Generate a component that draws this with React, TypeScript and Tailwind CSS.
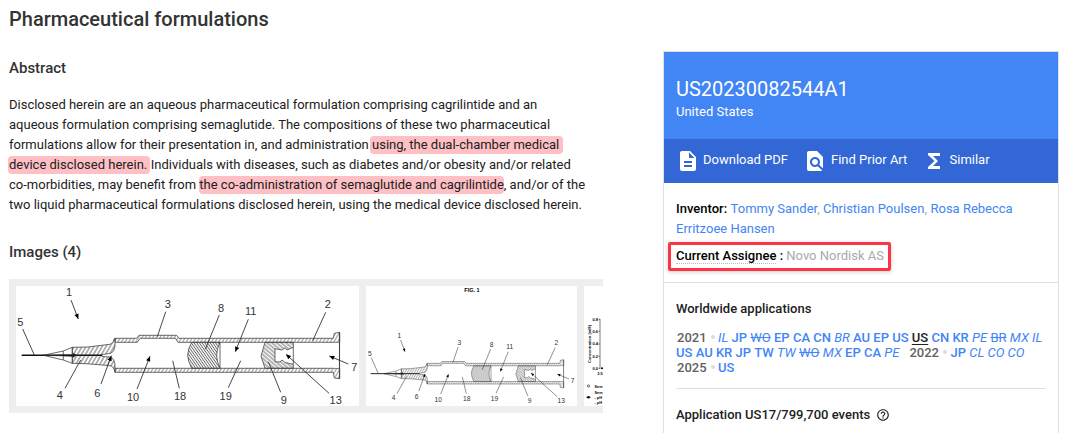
import React from "react";
import { MdDescription, MdFindInPage, MdFunctions, MdHelpOutline } from "react-icons/md";

type Application = {
  code: string;
  status?: "pending" | "ceased" | "current";
};

type Label = {
  text: string;
  x: number;
  y: number;
  // leader line from the number to the part
  line: [number, number, number, number];
  arrow?: boolean;
};

const labels: Label[] = [
  { text: "1", x: 53, y: 10, line: [55, 14, 62.3, 33], arrow: true },
  { text: "2", x: 311.7, y: 22.3, line: [309.7, 26.3, 296.7, 54.7] },
  { text: "3", x: 151.7, y: 22.3, line: [149.7, 25.7, 141.3, 50.7] },
  { text: "4", x: 43.7, y: 112.7, line: [49, 102.3, 64.7, 74] },
  { text: "5", x: 4.3, y: 40.3, line: [6.7, 43, 18.3, 69] },
  { text: "6", x: 81.3, y: 110.7, line: [85, 98, 95.3, 69.7], arrow: true },
  { text: "7", x: 338.3, y: 85.3, line: [332.3, 78, 313.3, 70], arrow: true },
  { text: "8", x: 205, y: 25.7, line: [203.3, 29, 189.3, 63.3] },
  { text: "9", x: 267.7, y: 118, line: [264.7, 106.3, 252.3, 75.7] },
  { text: "10", x: 117, y: 115.3, line: [121, 103, 134, 70.3], arrow: true },
  { text: "11", x: 234.7, y: 29, line: [232.3, 33.3, 219.3, 65.7], arrow: true },
  { text: "13", x: 319.7, y: 118, line: [313, 107.3, 270, 68.3], arrow: true },
  { text: "18", x: 164, y: 114.3, line: [163.3, 102.3, 156.7, 74.7] },
  { text: "19", x: 209.7, y: 113.7, line: [212.3, 101.7, 224.7, 74.7] },
];

const apps2021a: Application[] = [
  { code: "IL", status: "pending" },
  { code: "JP" },
  { code: "WO", status: "ceased" },
  { code: "EP" },
  { code: "CA" },
  { code: "CN" },
  { code: "BR", status: "pending" },
  { code: "AU" },
  { code: "EP" },
  { code: "US" },
  { code: "US", status: "current" },
  { code: "CN" },
  { code: "KR" },
  { code: "PE", status: "pending" },
  { code: "BR", status: "ceased" },
  { code: "MX", status: "pending" },
  { code: "IL", status: "pending" },
];

const apps2021b: Application[] = [
  { code: "US" },
  { code: "AU" },
  { code: "KR" },
  { code: "JP" },
  { code: "TW" },
  { code: "TW", status: "pending" },
  { code: "WO", status: "ceased" },
  { code: "MX", status: "pending" },
  { code: "EP" },
  { code: "CA" },
  { code: "PE", status: "pending" },
];

const apps2022: Application[] = [
  { code: "JP" },
  { code: "CL", status: "pending" },
  { code: "CO", status: "pending" },
  { code: "CO", status: "pending" },
];

const Syringe = ({ id }: { id: string }) => (
  <g stroke="#444" strokeWidth="0.8" fill="none">
    <defs>
      <pattern id={`${id}-wall`} width="3.6" height="8" patternUnits="userSpaceOnUse" patternTransform="skewX(-30)">
        <path d="M1 0V8" stroke="#555" strokeWidth="0.7" />
      </pattern>
      <pattern id={`${id}-hub`} width="4" height="8" patternUnits="userSpaceOnUse" patternTransform="skewX(-30)">
        <path d="M1 0V8" stroke="#444" strokeWidth="0.8" />
      </pattern>
      <pattern id={`${id}-piston`} width="2.2" height="8" patternUnits="userSpaceOnUse" patternTransform="rotate(-35)">
        <path d="M1 0V8" stroke="#555" strokeWidth="0.8" />
      </pattern>
      <pattern id={`${id}-stopper`} width="3" height="8" patternUnits="userSpaceOnUse" patternTransform="rotate(-50)">
        <path d="M1 0V8" stroke="#444" strokeWidth="0.8" />
      </pattern>
    </defs>
    {/* needle and hub */}
    <path d="M27.3 69.3L47.3 65L56.3 61.3V77.3L47.3 74ZM47.3 65V74" />
    <path
      d="M56.3 61.3L72 61L94 58.3Q98 57.5 98 53L99 52.3V56.3Q99.5 66 94 67.5L86 68.5V70.5L94 71Q99.5 72.5 99 82.3V86.3Q98 80.5 94 79.7L72 77.8L56.3 77.3Z"
      fill={`url(#${id}-hub)`}
    />
    <path d="M5.7 69.3H86" stroke="#111" strokeWidth="1.5" />
    <path d="M28 69.3L57 68.4V70.4ZM57 67L60.5 69.3L57 71.6Z" fill="#111" strokeWidth="0.4" />
    {/* barrel */}
    <path
      d="M99 52.3H120.7L123 49.3H160.7L163 52.3H317.3L318.3 47.3L323.7 46.3V56.3H162L159.5 52.3H124L121.5 56.3H99Z"
      fill={`url(#${id}-wall)`}
    />
    <path d="M99 82.3H323.7V92.7L318.3 92L317.3 86.3H99Z" fill={`url(#${id}-wall)`} />
    <path d="M318 56.9H322.8V81.7H318Z" fill="#fff" stroke="none" />
    <path d="M323.5 46.3V92.7" strokeWidth="1.1" />
    {/* pistons */}
    <path d="M175.7 56.3H204Q197.4 69.3 204 82.3H175.7L172.7 75Q170.7 69.3 172.7 63Z" fill={`url(#${id}-piston)`} />
    <path d="M204 56.3V82.3" />
    <path
      d="M249 56.3H277.3V61.3L271 64L269 61.8L266 64L259 62.7V75.7L264 76L266 74L269 76.5L277.3 78.3V82.3H249L245 70Z"
      fill={`url(#${id}-stopper)`}
    />
    <path d="M277.3 61.3V78.3" />
    {labels.map(({ text, x, y, line: [x1, y1, x2, y2], arrow }) => {
      const angle = (Math.atan2(y2 - y1, x2 - x1) * 180) / Math.PI;
      return (
        <g key={text}>
          <path d={`M${x1} ${y1}L${x2} ${y2}`} stroke="#333" strokeWidth="0.9" />
          {arrow && (
            <path
              d="M0 0L-5 -2.2V2.2Z"
              fill="#000"
              stroke="none"
              transform={`translate(${x2} ${y2}) rotate(${angle})`}
            />
          )}
          <text x={x} y={y} fill="#333" stroke="none" fontSize="11" textAnchor="middle">
            {text}
          </text>
        </g>
      );
    })}
  </g>
);

const chartTicks = [
  { label: "0.8", y: 33.3 },
  { label: "0.6", y: 45.3 },
  { label: "0.4", y: 58 },
  { label: "0.2", y: 70.3 },
  { label: "0.0", y: 82.3 },
];

const ConcentrationChart = () => (
  <svg className="h-[120px] w-[19px] shrink-0 bg-white" viewBox="0 0 19 120" fontSize="4" fontWeight="bold">
    <text transform="translate(6.5 58) rotate(-90)" textAnchor="middle" textLength="38">
      Concentration (mM)
    </text>
    {chartTicks.map(({ label, y }) => (
      <g key={label}>
        <text x="14" y={y + 1.4} textAnchor="end">
          {label}
        </text>
        <path d={`M14.5 ${y}H16`} stroke="#222" strokeWidth="0.6" />
      </g>
    ))}
    <path d="M16 33V83" stroke="#444" strokeWidth="0.7" />
    <circle cx="18" cy="82.3" r="1" />
    <text x="13.2" y="88.5" textLength="5.5" lengthAdjust="spacingAndGlyphs">
      3.5
    </text>
    <circle cx="4.5" cy="100" r="1.1" fill="none" stroke="#222" strokeWidth="0.7" />
    <text x="10.5" y="101.5" textLength="8" lengthAdjust="spacingAndGlyphs">
      Sem
    </text>
    <path d="M2 111.3H7" stroke="#222" strokeWidth="0.6" />
    <circle cx="4.5" cy="111.3" r="1.3" />
    <text x="10.5" y="108" textLength="8" lengthAdjust="spacingAndGlyphs">
      Sem
    </text>
    <text x="10.5" y="112.8" textLength="7.5" lengthAdjust="spacingAndGlyphs">
      - pH
    </text>
    <text x="10.5" y="118" textLength="7.5" lengthAdjust="spacingAndGlyphs">
      - pH
    </text>
  </svg>
);

const Mark = ({ className = "", children }: { className?: string; children: React.ReactNode }) => (
  <mark className={`rounded-[4px] bg-[#ffc0c5] pt-[1px] pb-[2px] text-inherit ${className}`}>{children}</mark>
);

const Apps = ({ items }: { items: Application[] }) => (
  <>
    {items.map(({ code, status }, i) => (
      <React.Fragment key={i}>
        {i > 0 && " "}
        {status === "pending" && <i>{code}</i>}
        {status === "ceased" && <s>{code}</s>}
        {status === "current" && <b className="font-medium text-[#212121] underline underline-offset-2">{code}</b>}
        {!status && <b className="font-medium">{code}</b>}
      </React.Fragment>
    ))}
  </>
);

const Year = ({ year }: { year: string }) => (
  <>
    <span className="ml-[1px] font-medium text-[#616161]">{year}</span>
    <span className="mr-[3px] ml-[4.5px] inline-block size-[4px] rounded-full bg-[#dadce0] align-[3px]" />
  </>
);

const App = () => {
  return (
    <div className="flex h-[433px] w-[1073px] overflow-hidden bg-white font-['Roboto',sans-serif] text-[13px] text-[#212121]">
      <main className="w-[603px] shrink-0 pl-[9px]">
        <h1 className="mt-[7px] text-[20px] leading-6 font-medium whitespace-nowrap text-[#333]">
          Pharmaceutical formulations
        </h1>
        <h2 className="mt-[27px] text-[15px] leading-5 font-medium text-[#333]">Abstract</h2>
        <p className="mt-[17px] leading-5 whitespace-nowrap">
          Disclosed herein are an aqueous pharmaceutical formulation comprising cagrilintide and an
          <br />
          aqueous formulation comprising semaglutide. The compositions of these two pharmaceutical
          <br />
          formulations allow for their presentation in, and administration{" "}
          <Mark className="-ml-[2px] pr-[4px] pl-[2px]">using, the dual-chamber medical</Mark>
          <br />
          <Mark className="-ml-[1px] pr-[3px] pl-[1px]">device disclosed herein.</Mark>
          <span className="ml-[0.5px]">Individuals with diseases, such as diabetes and/or obesity and/or related</span>
          <br />
          co-morbidities, may benefit from <Mark>the co-administration of semaglutide and cagrilintide</Mark>, and/or of
          the
          <br />
          two liquid pharmaceutical formulations disclosed herein, using the medical device disclosed herein.
        </p>
        <h2 className="mt-[27px] text-[15px] leading-5 font-medium text-[#333]">Images (4)</h2>
        <div className="mt-[17px] flex h-[134px] gap-[7px] overflow-hidden bg-[#eee] py-[7px] pl-[7px] font-['Liberation_Sans',sans-serif]">
          <svg className="h-[120px] w-[343px] shrink-0 bg-white" viewBox="0 0 343 120">
            <Syringe id="main" />
          </svg>
          <svg className="h-[120px] w-[211px] shrink-0 bg-white" viewBox="0 0 211 120">
            <text x="106" y="6.3" fontSize="5.5" fontWeight="bold" textAnchor="middle">
              FIG. 1
            </text>
            <g transform="translate(1.2 45.6) scale(0.607)">
              <Syringe id="fig" />
            </g>
          </svg>
          <ConcentrationChart />
        </div>
      </main>

      <aside className="mt-[51px] ml-[60px] h-[400px] w-[396px] shrink-0 border border-[#e0e0e0]">
        <header className="h-[87px] bg-[#4285f4] pt-[25px] pl-[12px] text-white">
          <h2 className="text-[20px] leading-6">US20230082544A1</h2>
          <p className="mt-[1px] leading-5">United States</p>
        </header>
        <nav className="flex h-[44px] items-center bg-[#3367d6] pl-[12px] leading-5 text-white">
          <a className="flex w-[127px] items-center gap-[3px]">
            <MdDescription className="size-6" />
            <span className="-mt-[2px]">Download PDF</span>
          </a>
          <a className="flex w-[119px] items-center gap-[4px]">
            <MdFindInPage className="size-6" />
            <span className="-mt-[2px]">Find Prior Art</span>
          </a>
          <a className="flex items-center gap-[3.5px]">
            <MdFunctions className="size-6" />
            <span className="-mt-[2px]">Similar</span>
          </a>
        </nav>
        <section className="h-[100px] border-b border-[#e0e0e0] pt-[16px] pl-[12px] leading-5 whitespace-nowrap text-[#aaa]">
          <p>
            <span className="font-medium text-black">Inventor:</span>{" "}
            <a className="ml-[0.3px] text-[#4285f4]">Tommy Sander</a>,{" "}
            <a className="text-[#4285f4]">Christian Poulsen</a>,{" "}
            <a className="ml-[0.3px] text-[#4285f4]">Rosa Rebecca</a>
            <br />
            <a className="text-[#4285f4]">Erritzoee Hansen</a>
          </p>
          <div className="relative mt-[7px] w-fit">
            <span className="border-b border-dotted border-[#bbb] font-medium text-black">Current Assignee</span>{" "}
            <span className="font-medium text-black">:</span> Novo Nordisk AS
            <span className="absolute -top-[4px] -left-[8.5px] h-[29px] w-[223.5px] rounded-[2px] border-[3px] border-[#fb3545] shadow-[0_1px_4px_rgba(0,0,0,0.2)]" />
          </div>
        </section>
        <section className="px-[12px] pt-[16px]">
          <h3 className="leading-5 font-medium">Worldwide applications</h3>
          <p className="mt-[11px] leading-[15px] whitespace-nowrap text-[#4285f4]">
            <Year year="2021" />
            <Apps items={apps2021a} />
            <br />
            <Apps items={apps2021b} />
            <span className="ml-[9px]">
              <Year year="2022" />
            </span>
            <Apps items={apps2022} />
            <br />
            <Year year="2025" />
            <b className="font-medium">US</b>
          </p>
          <hr className="mt-[13px] border-[#e0e0e0]" />
          <h3 className="mt-[16px] flex items-center gap-[6px] leading-5 font-medium">
            Application US17/799,700 events
            <MdHelpOutline className="size-[14px]" />
          </h3>
        </section>
      </aside>
    </div>
  );
};

export default App;
